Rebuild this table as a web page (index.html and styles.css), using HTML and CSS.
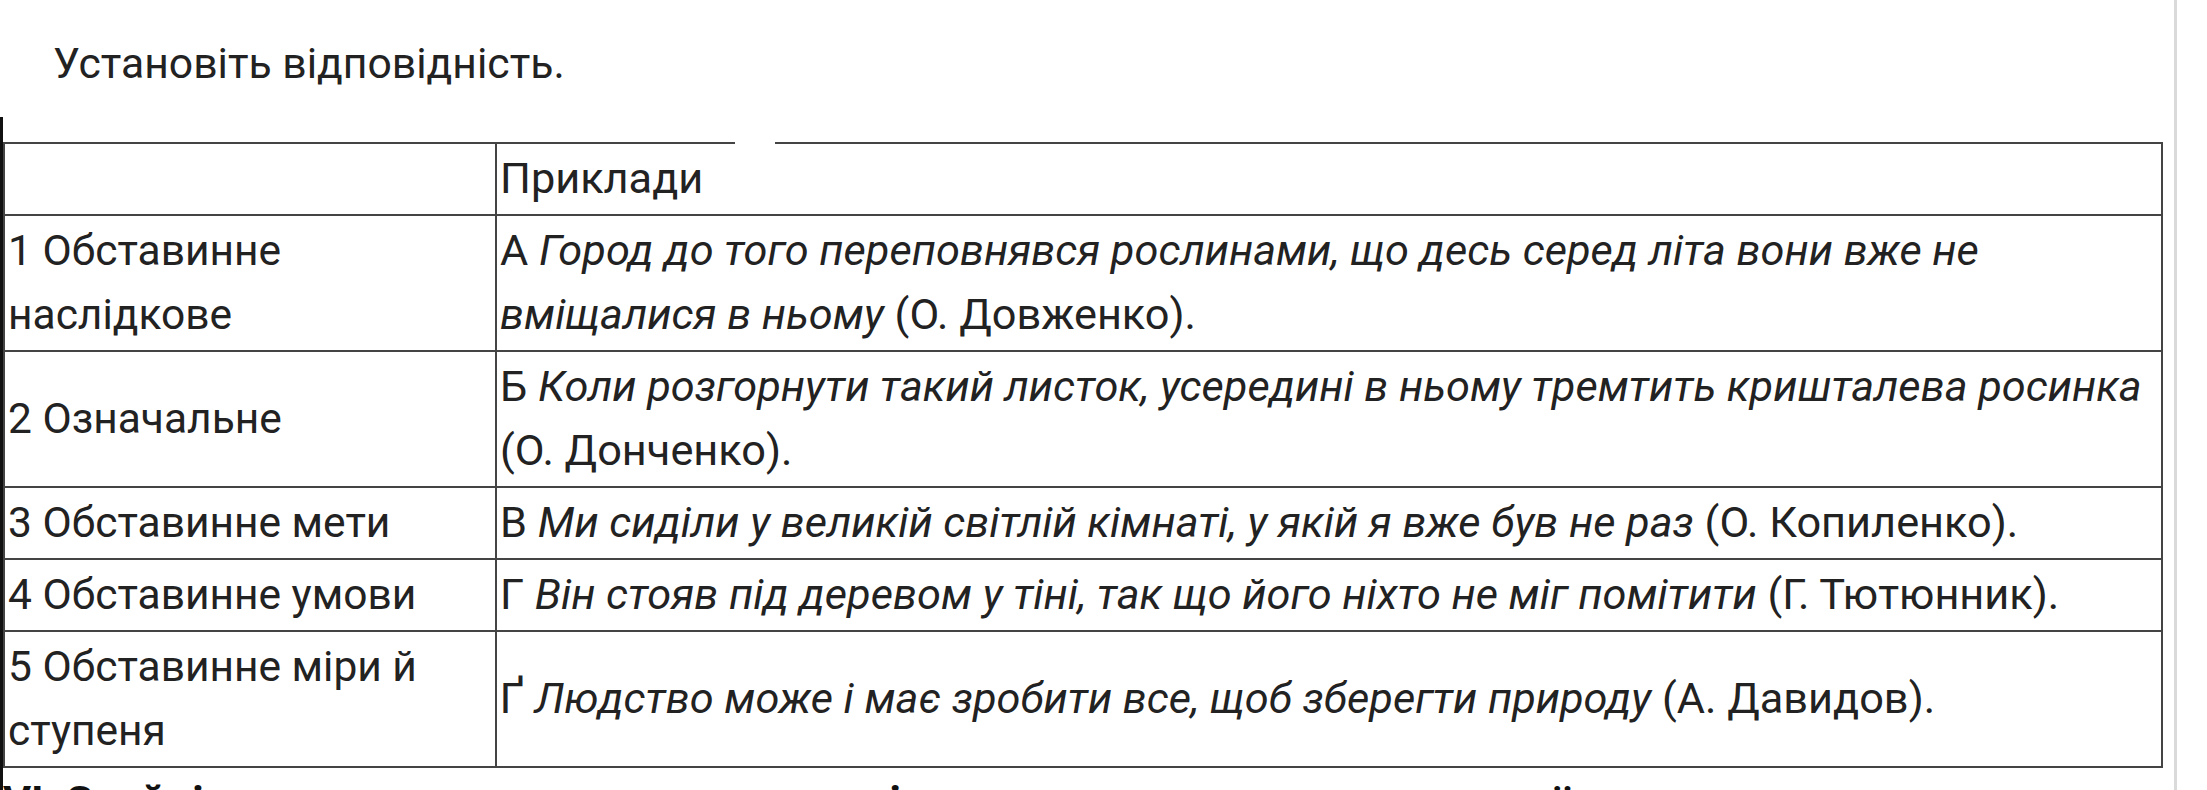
FILE: index.html
```html
<!DOCTYPE html>
<html lang="uk">
<head>
<meta charset="utf-8">
<title>Установіть відповідність</title>
<link rel="stylesheet" href="styles.css">
</head>
<body>
<div class="page">
  <p class="title">Установіть відповідність.</p>
  <div class="content">
    <div class="table-wrap">
      <table class="match">
        <colgroup>
          <col class="c1">
          <col class="c2">
        </colgroup>
        <tr>
          <td class="kind"></td>
          <td class="example">Приклади</td>
        </tr>
        <tr>
          <td class="kind">1 Обставинне наслідкове</td>
          <td class="example">А <i>Город до того переповнявся рослинами, що десь серед літа вони вже не вміщалися в ньому</i> (О. Довженко).</td>
        </tr>
        <tr>
          <td class="kind">2 Означальне</td>
          <td class="example">Б <i>Коли розгорнути такий листок, усередині в ньому тремтить кришталева росинка</i> (О. Донченко).</td>
        </tr>
        <tr>
          <td class="kind">3 Обставинне мети</td>
          <td class="example">В <i>Ми сиділи у великій світлій кімнаті, у якій я вже був не раз</i> (О. Копиленко).</td>
        </tr>
        <tr>
          <td class="kind">4 Обставинне умови</td>
          <td class="example">Г <i>Він стояв під деревом у тіні, так що його ніхто не міг помітити</i> (Г. Тютюнник).</td>
        </tr>
        <tr>
          <td class="kind">5 Обставинне міри й ступеня</td>
          <td class="example">Ґ <i>Людство може і має зробити все, щоб зберегти природу</i> (А. Давидов).</td>
        </tr>
      </table>
      <span class="gap"></span>
    </div>
    <p class="next">VI. Знайдіть у поданому уривку речення з підрядними частинами, визначте їх вид.</p>
  </div>
</div>
</body>
</html>
```
FILE: styles.css
```css
html, body {
  margin: 0;
  padding: 0;
  background: #fff;
}

body {
  font-family: Roboto, "Noto Sans", "DejaVu Sans", sans-serif;
  color: #222;
  overflow: hidden;
  height: 790px;
}

.page {
  width: 2174px;
  border-right: 3px solid #dadada;
  min-height: 790px;
}

.title {
  margin: 0;
  padding: 31px 0 0 53px;
  font-size: 42.7px;
  line-height: 64px;
}

.content {
  margin-top: 22px;
  border-left: 3px solid #111;
  padding-top: 25px;
  min-height: 700px;
}

.table-wrap {
  position: relative;
}

.match {
  border-collapse: separate;
  border-spacing: 0;
  table-layout: fixed;
  width: 2160px;
  border-top: 2px solid #444;
  border-left: 2px solid #444;
  font-size: 43px;
  line-height: 64px;
}

.c1 {
  width: 492px;
}

.match td {
  border-right: 2px solid #444;
  border-bottom: 2px solid #444;
  padding: 3px 2px 3px 3px;
  vertical-align: middle;
}

.match .kind {
  font-size: 42.5px;
}

.match .example {
  font-size: 43.3px;
}

.match i {
  font-style: italic;
}

.gap {
  position: absolute;
  left: 732px;
  top: -1px;
  width: 40px;
  height: 4px;
  background: #fff;
}

.next {
  margin: 1px 0 0;
  font-size: 43px;
  line-height: 64px;
  font-weight: 700;
  color: #111;
}
```
